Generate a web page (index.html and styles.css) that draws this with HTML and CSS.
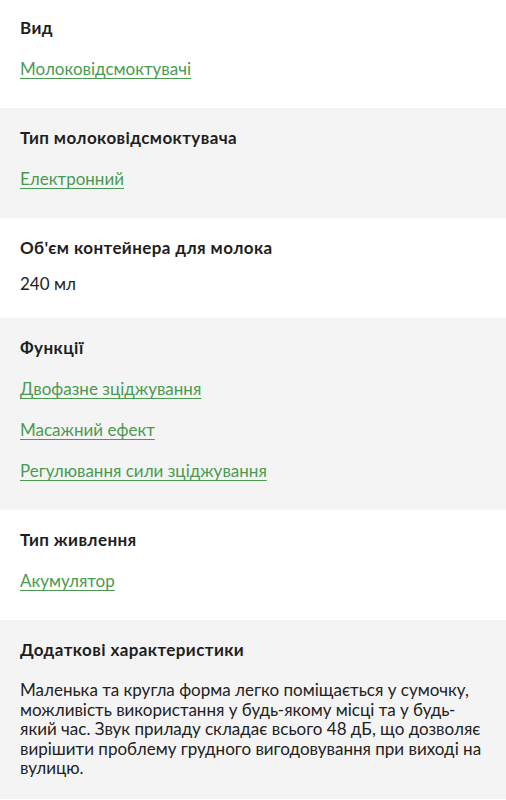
FILE: index.html
```html
<!DOCTYPE html>
<html lang="uk">
<head>
<meta charset="utf-8">
<title>Характеристики</title>
<link rel="stylesheet" href="styles.css">
</head>
<body>
<div class="specs">
  <section class="spec">
    <h3 class="spec-title">Вид</h3>
    <ul class="spec-links">
      <li><a href="#">Молоковідсмоктувачі</a></li>
    </ul>
  </section>
  <section class="spec spec-alt">
    <h3 class="spec-title">Тип молоковідсмоктувача</h3>
    <ul class="spec-links">
      <li><a href="#">Електронний</a></li>
    </ul>
  </section>
  <section class="spec">
    <h3 class="spec-title">Об'єм контейнера для молока</h3>
    <div class="spec-value">240 мл</div>
  </section>
  <section class="spec spec-alt">
    <h3 class="spec-title">Функції</h3>
    <ul class="spec-links">
      <li><a href="#">Двофазне зціджування</a></li>
      <li><a href="#">Масажний ефект</a></li>
      <li><a href="#">Регулювання сили зціджування</a></li>
    </ul>
  </section>
  <section class="spec">
    <h3 class="spec-title">Тип живлення</h3>
    <ul class="spec-links">
      <li><a href="#">Акумулятор</a></li>
    </ul>
  </section>
  <section class="spec spec-alt">
    <h3 class="spec-title">Додаткові характеристики</h3>
    <p class="spec-text">Маленька та кругла форма легко поміщається у сумочку, можливість використання у будь-якому місці та у будь-який час. Звук приладу складає всього 48 дБ, що дозволяє вирішити проблему грудного вигодовування при виході на вулицю.</p>
  </section>
</div>
</body>
</html>
```

FILE: styles.css
```css
* { box-sizing: border-box; }
html, body {
  margin: 0;
  padding: 0;
  background: #ffffff;
}
body {
  font-family: "Lato", "Noto Sans", "Liberation Sans", sans-serif;
  color: #222222;
  font-size: 17px;
}
.specs {
  display: flex;
  flex-direction: column;
}
.spec {
  padding: 19px 20px 19px;
  background: #ffffff;
}
.spec:first-child {
  padding-top: 17px;
}
.spec-alt {
  background: #f4f4f4;
}
.spec-title {
  margin: 0;
  font-size: 17px;
  line-height: 22px;
  font-weight: 700;
  letter-spacing: 0.4px;
  color: #1e1e1e;
}
.spec-links {
  list-style: none;
  margin: 10px 0 0;
  padding: 0;
}
.spec-links li {
  padding: 9px 0;
  line-height: 22px;
}
.spec-links li + li {
  margin-top: 1px;
}
.spec-links a {
  color: #4a9a52;
  font-size: 17px;
  text-decoration: underline;
  text-decoration-thickness: 1px;
  text-underline-offset: 3px;
}
.spec-value {
  margin: 14px 0 4px;
  line-height: 22px;
  font-size: 17px;
  color: #222222;
}
.spec-text {
  margin: 19px 0 2px;
  font-size: 17px;
  line-height: 19.5px;
  color: #222222;
}
```
